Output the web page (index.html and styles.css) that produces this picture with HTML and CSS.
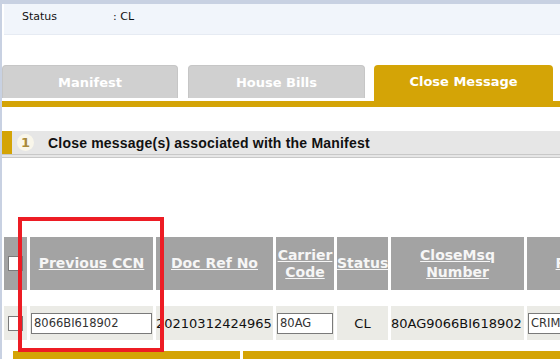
FILE: index.html
```html
<!DOCTYPE html>
<html lang="en">
<head>
    <meta charset="UTF-8">
    <meta name="viewport" content="width=device-width, initial-scale=1.0">
    <title>Close Message</title>
    <link rel="stylesheet" href="styles.css">
</head>
<body>
    <div class="page">
        <div class="status-panel">
            <span class="status-label">Status</span>
            <span class="status-value">: CL</span>
        </div>

        <div class="tabs">
            <div class="tab tab-manifest">Manifest</div>
            <div class="tab tab-house">House Bills</div>
            <div class="tab tab-active">Close Message</div>
        </div>
        <div class="tab-bar"></div>

        <div class="section-head">
            <span class="section-mark"></span>
            <span class="section-num">1</span>
            <span class="section-title">Close message(s) associated with the Manifest</span>
        </div>

        <div class="grid-wrap">
            <table class="grid">
                <tr class="head-row">
                    <th class="col-check"><input type="checkbox" class="check"></th>
                    <th class="col-ccn"><a href="#">Previous CCN</a></th>
                    <th class="col-doc"><a href="#">Doc Ref No</a></th>
                    <th class="col-carrier"><a href="#">Carrier Code</a></th>
                    <th class="col-status"><a href="#">Status</a></th>
                    <th class="col-msg"><a href="#">CloseMsq Number</a></th>
                    <th class="col-reason"><a href="#">Remarks</a></th>
                </tr>
                <tr class="spacer"><td colspan="7"></td></tr>
                <tr class="data-row">
                    <td class="col-check"><input type="checkbox" class="check"></td>
                    <td><input type="text" class="field field-ccn" value="8066BI618902"></td>
                    <td>20210312424965</td>
                    <td><input type="text" class="field field-carrier" value="80AG"></td>
                    <td class="center">CL</td>
                    <td>80AG9066BI618902</td>
                    <td><input type="text" class="field field-reason" value="CRIMSON"></td>
                </tr>
            </table>
        </div>

        <div class="footer-bars">
            <div class="footer-bar footer-left"></div>
            <div class="footer-bar footer-right"></div>
        </div>

        <div class="highlight"></div>
    </div>
</body>
</html>
```

FILE: styles.css
```css
html, body {
    margin: 0;
    height: 100%;
    overflow: hidden;
}
body {
    background-color: #c8d1e2;
    font-family: "DejaVu Sans", Verdana, sans-serif;
    color: #111;
}
.page {
    position: relative;
    margin: 4px 0 0 2px;
    background-color: #fff;
    height: 400px;
    overflow: hidden;
}
.status-panel {
    height: 31px;
    margin-left: 2px;
    background-color: #f1f5fb;
    border-bottom: 1px solid #e6ebf3;
    display: flex;
    align-items: flex-start;
    padding: 6px 0 0 18px;
    box-sizing: border-box;
    font-size: 11px;
}
.status-label {
    width: 91px;
}
.tabs {
    display: flex;
    align-items: flex-end;
    margin-top: 30px;
    height: 36px;
}
.tab {
    display: flex;
    align-items: center;
    justify-content: center;
    font-weight: bold;
    font-size: 13px;
    color: #fff;
    border-radius: 4px 4px 0 0;
    box-sizing: border-box;
}
.tab-manifest,
.tab-house {
    height: 33px;
    margin-bottom: 3px;
    background-color: #d0d0d0;
    border: 1px solid #c6c6c6;
    border-bottom: none;
}
.tab-manifest {
    width: 176px;
}
.tab-house {
    width: 177px;
    margin-left: 10px;
}
.tab-active {
    width: 179px;
    height: 36px;
    margin-left: 9px;
    padding-bottom: 3px;
    background-color: #d4a406;
}
.tab-bar {
    height: 6px;
    background-color: #d4a406;
}
.section-head {
    display: flex;
    align-items: center;
    margin-top: 24px;
    height: 23px;
    background-color: #e6e6e6;
    border-bottom: 4px double #c8c8c8;
}
.section-mark {
    width: 10px;
    height: 100%;
    background-color: #d4a406;
}
.section-num {
    width: 17px;
    height: 17px;
    margin-left: 5px;
    border-radius: 50%;
    background-color: #f9f6ea;
    color: #a98a3a;
    font-size: 13px;
    font-weight: bold;
    display: flex;
    align-items: center;
    justify-content: center;
}
.section-title {
    margin-left: 14px;
    font-family: "Liberation Sans", Arial, sans-serif;
    font-weight: bold;
    font-size: 14px;
    letter-spacing: 0.2px;
}
.grid-wrap {
    margin: 79px 0 0 -1px;
}
.grid {
    width: 655px;
    table-layout: fixed;
    border-collapse: separate;
    border-spacing: 3px 0;
    font-size: 13px;
    white-space: nowrap;
}
.grid th {
    height: 53px;
    padding: 0;
    background-color: #a3a3a3;
    font-size: 14px;
    line-height: 17px;
    white-space: normal;
}
.grid th a {
    color: #f6f6f6;
}
.grid td {
    height: 34px;
    padding: 0;
    background-color: #ebebe6;
    overflow: hidden;
}
.grid .spacer td {
    height: 16px;
    background: none;
}
.col-check { width: 23px; text-align: center; }
.col-ccn { width: 123px; }
.col-doc { width: 117px; }
.col-carrier { width: 58px; }
.col-status { width: 51px; }
.col-msg { width: 133px; }
.col-reason { width: 126px; }
.center {
    text-align: center;
}
.check {
    appearance: none;
    -webkit-appearance: none;
    display: block;
    width: 15px;
    height: 15px;
    margin: 0 auto;
    border: 1px solid #7a7a7a;
    background-color: #fff;
    box-sizing: border-box;
}
.field {
    display: block;
    height: 21px;
    margin: 0 1px;
    padding: 0 2px;
    border: 1px solid #7a7a7a;
    box-sizing: border-box;
    font-family: "DejaVu Sans", Verdana, sans-serif;
    font-size: 11.5px;
    color: #333;
    background-color: #fff;
}
.field-ccn { width: 121px; }
.field-carrier { width: 56px; }
.field-reason { width: 110px; }
.footer-bars {
    display: flex;
    gap: 3px;
    margin: 11px 0 0 11px;
}
.footer-bar {
    height: 20px;
    background-color: #d4a406;
}
.footer-left { width: 227px; }
.footer-right { flex: 1; }
.highlight {
    position: absolute;
    left: 16px;
    top: 213px;
    width: 146px;
    height: 135px;
    border: 4px solid #ed1c24;
    box-sizing: border-box;
}
```
